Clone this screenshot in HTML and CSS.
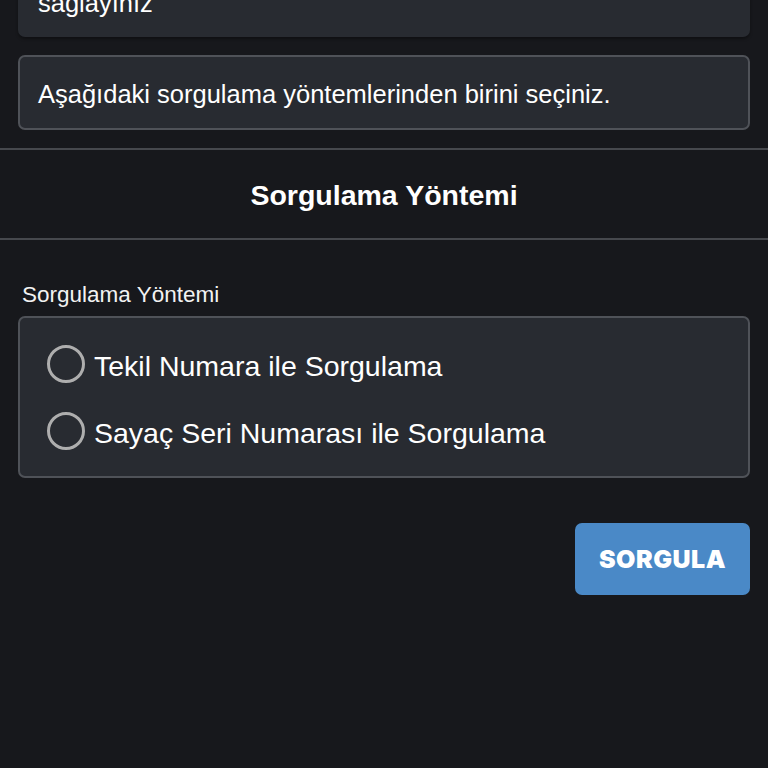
FILE: index.html
```html
<!DOCTYPE html>
<html lang="tr">
<head>
<meta charset="utf-8">
<title>Sorgulama</title>
<link rel="stylesheet" href="styles.css">
</head>
<body>
<div class="page">
  <div class="card card-top">
    <p class="card-text">sağlayınız</p>
  </div>
  <div class="card card-info">
    <p class="card-text">Aşağıdaki sorgulama yöntemlerinden birini seçiniz.</p>
  </div>
  <div class="section-head">
    <h2 class="section-title">Sorgulama Yöntemi</h2>
  </div>
  <form class="form">
    <label class="field-label">Sorgulama Yöntemi</label>
    <div class="radio-group">
      <label class="radio-row">
        <span class="radio-circle"></span>
        <span class="radio-text">Tekil Numara ile Sorgulama</span>
      </label>
      <label class="radio-row">
        <span class="radio-circle"></span>
        <span class="radio-text">Sayaç Seri Numarası ile Sorgulama</span>
      </label>
    </div>
    <div class="actions">
      <button type="button" class="btn-primary">SORGULA</button>
    </div>
  </form>
</div>
</body>
</html>
```

FILE: styles.css
```css
* { box-sizing: border-box; }
html, body {
  margin: 0;
  padding: 0;
  background: #17181c;
  color: #ffffff;
  font-family: "Liberation Sans", Arial, sans-serif;
}
.page {
  width: 768px;
  height: 768px;
  overflow: hidden;
  display: flex;
  flex-direction: column;
}
.card {
  margin: 0 18px;
  background: #282b31;
  border-radius: 7px;
}
.card-text {
  margin: 0;
  font-size: 25.5px;
  line-height: 30px;
  color: #ffffff;
}
.card-top {
  margin-top: -30px;
  height: 67px;
  padding: 18px 20px 0 20px;
  box-shadow: 0 2px 3px rgba(0,0,0,0.35);
}
.card-info {
  margin-top: 18px;
  height: 75px;
  border: 2px solid #4f5258;
  padding: 22px 18px 0 18px;
}
.section-head {
  margin-top: 18px;
  height: 92px;
  border-top: 2px solid #46484d;
  border-bottom: 2px solid #46484d;
  display: flex;
  align-items: center;
  justify-content: center;
}
.section-title {
  margin: 0;
  font-size: 28.5px;
  font-weight: 700;
  padding-top: 2px;
}
.form {
  display: flex;
  flex-direction: column;
  padding: 0 18px;
}
.field-label {
  margin-top: 42px;
  padding-left: 4px;
  font-size: 22.5px;
  line-height: 26px;
  color: #f2f2f2;
}
.radio-group {
  margin-top: 8px;
  height: 162px;
  background: #282b31;
  border: 2px solid #4f5258;
  border-radius: 7px;
  padding: 27px 0 0 27px;
  display: flex;
  flex-direction: column;
  gap: 29px;
}
.radio-row {
  display: flex;
  align-items: center;
  height: 38px;
}
.radio-circle {
  width: 38px;
  height: 38px;
  border-radius: 50%;
  border: 3px solid #aeaeae;
  flex: none;
}
.radio-text {
  margin-left: 9px;
  font-size: 28.5px;
  line-height: 34px;
  padding-top: 3px;
  color: #ffffff;
}
.actions {
  display: flex;
  justify-content: flex-end;
  margin-top: 45px;
}
.btn-primary {
  width: 175px;
  height: 72px;
  border: none;
  border-radius: 7px;
  background: #4a89c7;
  color: #ffffff;
  font-family: Inter, "Liberation Sans", sans-serif;
  font-weight: 900;
  font-size: 25px;
  letter-spacing: 0.5px;
  cursor: pointer;
}
```
